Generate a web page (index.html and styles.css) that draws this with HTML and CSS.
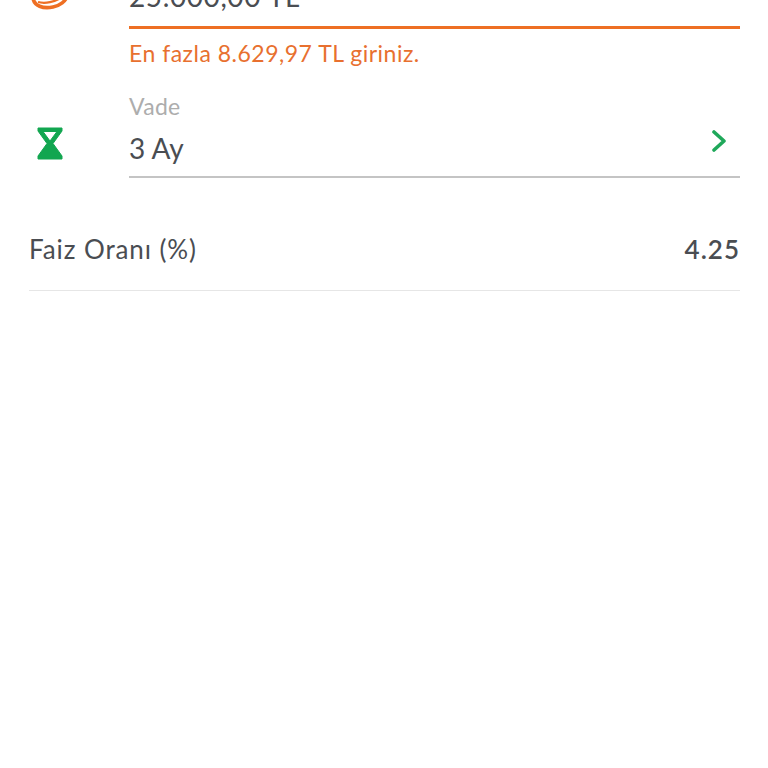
FILE: index.html
```html
<!DOCTYPE html>
<html lang="tr">
<head>
    <meta charset="UTF-8">
    <meta name="viewport" content="width=device-width, initial-scale=1.0">
    <title>Vadeli Hesap</title>
    <link rel="stylesheet" href="styles.css">
</head>
<body>

<div class="container">
    <!-- Tutar -->
    <div class="field">
        <div class="field-icon">
            <svg class="icon-coin" width="44" height="44" viewBox="0 0 44 44" fill="none">
                <path d="M4 26 C5 34 14 37 24 35 C31 33.500 37 29 38 24" stroke="#ee6f23" stroke-width="3.6" stroke-linecap="round"/>
                <path d="M9 30 C16 32 26 30 33 25" stroke="#ee6f23" stroke-width="2.2"/>
            </svg>
        </div>
        <div class="field-body">
            <div class="amount-value">25.000,00 TL</div>
            <div class="amount-line"></div>
            <div class="error-text">En fazla 8.629,97 TL giriniz.</div>
        </div>
    </div>

    <!-- Vade -->
    <div class="field term">
        <div class="field-icon">
            <svg class="icon-hourglass" width="26" height="33" viewBox="0 0 26 33">
                <path d="M1 1 H25 V4 L16 16.5 L25 29 V32 H1 V29 L10 16.5 L1 4 Z M6 4.5 L13 14 L20 4.5 Z" fill="#12a650" fill-rule="evenodd" stroke="#12a650" stroke-linejoin="round"/>
            </svg>
        </div>
        <div class="field-body term-body">
            <div class="term-label">Vade</div>
            <div class="term-row">
                <span class="term-value">3 Ay</span>
                <svg class="icon-chevron" width="14" height="22" viewBox="0 0 14 22" fill="none">
                    <path d="M2 2 L12 11 L2 20" stroke="#1fa85a" stroke-width="3.6" stroke-linecap="round" stroke-linejoin="round"/>
                </svg>
            </div>
        </div>
    </div>

    <!-- Faiz orani -->
    <div class="rate-row">
        <span class="rate-label">Faiz Oranı (%)</span>
        <span class="rate-value">4.25</span>
    </div>
</div>

</body>
</html>
```

FILE: styles.css
```css
html, body {
    height: 100%;
    overflow: hidden;
}

body {
    margin: 0;
    font-family: "Lato", "Noto Sans", sans-serif;
    background-color: #fff;
    color: #4a4d52;
}

.container {
    margin-top: -26px;
    padding: 0 28px 0 29px;
}

.field {
    display: flex;
}

.field-icon {
    width: 100px;
    flex-shrink: 0;
}

.field-body {
    flex: 1;
}

.icon-coin {
    display: block;
    margin-top: -2px;
}

.amount-value {
    height: 52px;
    line-height: 44px;
    font-size: 28px;
    letter-spacing: 0.6px;
}

.amount-line {
    height: 3px;
    background-color: #ee6f23;
}

.error-text {
    margin-top: 10px;
    line-height: 28px;
    font-size: 23px;
    letter-spacing: 0.5px;
    color: #e8702f;
}

.term {
    margin-top: 25px;
}

.term .field-icon {
    padding-top: 35px;
}

.icon-hourglass {
    display: block;
    margin-left: 8px;
}

.term-body {
    border-bottom: 2px solid #c4c4c4;
    height: 86px;
    box-sizing: border-box;
}

.term-label {
    line-height: 28px;
    font-size: 23px;
    letter-spacing: 0.3px;
    color: #adadad;
}

.term-row {
    display: flex;
    justify-content: space-between;
    margin-top: 11px;
}

.term-value {
    line-height: 34px;
    font-size: 28px;
}

.icon-chevron {
    margin: -1px 14px 0 0;
}

.rate-row {
    display: flex;
    justify-content: space-between;
    align-items: center;
    margin-top: 41px;
    height: 60px;
    padding-bottom: 11px;
    border-bottom: 1px solid #e6e6e6;
    font-size: 26px;
    letter-spacing: 0.9px;
}

.rate-value {
    font-weight: 600;
    letter-spacing: 1px;
}
```
